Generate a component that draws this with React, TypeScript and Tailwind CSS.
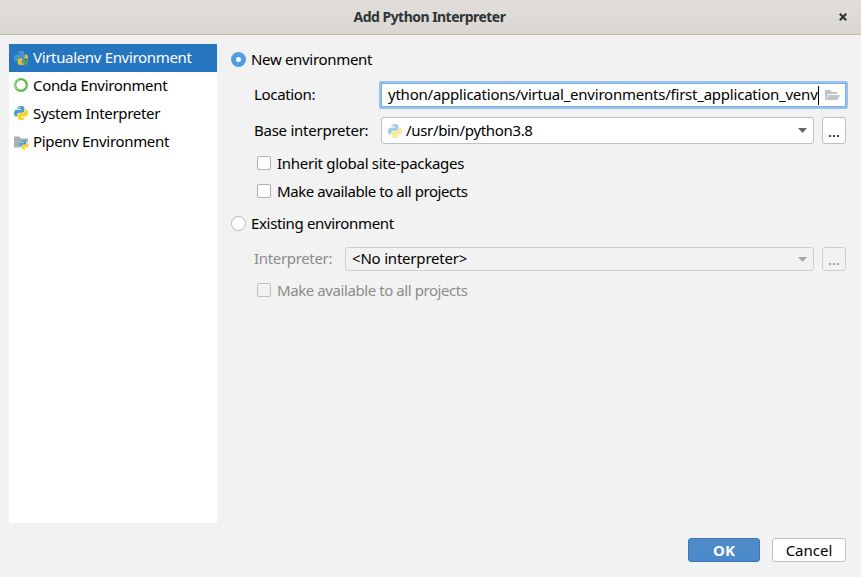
import type { ReactNode } from "react";

const SNAKE =
  "M4.6 4V2.6C4.6 1.5 6 1 8 1s3.3.6 3.3 1.7v3.1c0 1.2-.9 2-2 2H6.4c-1.300 0-2.200.9-2.200 2.100v1.500H3.100C1.700 11.400 1 10 1 8s.8-3.300 2.200-3.300h5V4zM6.200 2.100a.7.7 0 1 0 0 1.400.7.7 0 0 0 0-1.400z";

function Snakes({ transform }: { transform?: string }) {
  return (
    <g transform={transform}>
      <path d={SNAKE} fill="#4a9fd0" />
      <path d={SNAKE} fill="#ffd21f" transform="rotate(180 8 8)" />
    </g>
  );
}

function PythonIcon({ className = "" }: { className?: string }) {
  return (
    <svg viewBox="0 0 16 16" className={`size-4 shrink-0 ${className}`}>
      <Snakes />
    </svg>
  );
}

function VenvIcon() {
  return (
    <svg viewBox="0 0 16 16" className="-mt-px size-4 shrink-0">
      <g opacity=".85">
        <Snakes />
      </g>
      <path d="M9 8.5H16v7.5h-4z" fill="#2675bf" />
      <path d="M10.6 9.6l2.1 5.1 2.1-5.1" fill="none" stroke="#62b543" strokeWidth="1.2" />
    </svg>
  );
}

function CondaIcon() {
  return (
    <svg viewBox="0 0 16 16" className="-mt-[2px] size-4 shrink-0" fill="none">
      <circle cx="8" cy="8" r="5.8" stroke="#43b02a" strokeOpacity=".85" strokeWidth="2.3" />
      <path d="M3.8 12A5.8 5.8 0 0 1 5.7 2.7" stroke="#fff" strokeWidth="1" strokeDasharray="1 1.1" />
    </svg>
  );
}

function PipenvIcon() {
  return (
    <svg viewBox="0 0 16 16" className="size-4 shrink-0">
      <path d="M1 2.5h5.2L8 4.5h7V8H9L6 11v2.5H1z" fill="#a5b0b9" />
      <Snakes transform="translate(5.5 5.5) scale(.68)" />
    </svg>
  );
}

function Item({ icon, label, selected }: { icon: ReactNode; label: string; selected?: boolean }) {
  return (
    <div className={`flex h-7 items-center gap-1 pl-1 ${selected ? "bg-[#2675bf] text-white" : ""}`}>
      {icon}
      <span className="pb-[2px] tracking-[-0.33px]">{label}</span>
    </div>
  );
}

function Arrow({ color }: { color: string }) {
  return (
    <svg viewBox="0 0 9 5" className="ml-auto mr-[6px] h-[5px] w-[9px]">
      <path d="M0 0h9L4.5 5z" fill={color} />
    </svg>
  );
}

function Check({ label, disabled, track }: { label: string; disabled?: boolean; track: string }) {
  return (
    <label className={`flex h-7 items-center gap-[6px] pl-[26px] ${disabled ? "text-[#8c8c8c]" : ""}`}>
      <span
        className={`size-[14px] rounded-[2px] border ${disabled ? "border-[#bfbfbf]" : "border-[#b0b0b0] bg-white"}`}
      />
      <span className={track}>{label}</span>
    </label>
  );
}

export default function App() {
  return (
    <div className="flex h-[577px] w-[861px] flex-col overflow-hidden bg-[#f2f2f2] font-['Noto_Sans',sans-serif] text-[15px] leading-5 whitespace-nowrap text-black">
      <header className="flex h-[35px] shrink-0 items-center border-b border-[#c4b8ad] bg-linear-to-b from-[#e1dedb] to-[#dad6d2] text-[#2e3436]">
        <div className="w-9" />
        <h1 className="flex-1 pr-[2px] text-center text-[14px] font-bold tracking-[-0.53px]">Add Python Interpreter</h1>
        <svg viewBox="0 0 8 8" className="mr-[14px] ml-[14px] size-2">
          <path d="M.8.8l6.4 6.4M7.2.8L.8 7.2" stroke="#2e3436" strokeWidth="2.1" />
        </svg>
      </header>
      <div className="flex h-[488px] pt-[9px] pl-[9px]">
        <aside className="w-[208px] shrink-0 bg-white">
          <Item selected icon={<VenvIcon />} label="Virtualenv Environment" />
          <Item icon={<CondaIcon />} label="Conda Environment" />
          <Item icon={<PythonIcon className="-mt-[2px]" />} label="System Interpreter" />
          <Item icon={<PipenvIcon />} label="Pipenv Environment" />
        </aside>
        <main className="flex min-w-0 flex-1 flex-col pr-[14px] pl-[14px]">
          <label className="flex h-[30px] items-center gap-[5px]">
            <span className="flex size-[15px] items-center justify-center rounded-full bg-[#4f9ee3]">
              <span className="size-[5px] rounded-full bg-white" />
            </span>
            <span className="tracking-[-0.32px]">New environment</span>
          </label>
          <div className="-mr-px mt-[7px] flex h-[28px] items-center pl-[23px]">
            <span className="w-[125px] pb-[2px] tracking-[-0.33px]">Location:</span>
            <div className="flex h-7 min-w-0 flex-1 items-center rounded-[2px] border-2 border-[#97c3f3] bg-white">
              <div className="flex h-full flex-1 items-center border border-[#7eadde] pl-[6px]">
                <span className="pb-[2px] tracking-[-0.226px]">
                  ython/applications/virtual_environments/first_application_venv
                </span>
                <span className="h-[19px] w-px bg-black" />
                <svg viewBox="0 0 16 16" className="ml-auto mr-[5px] size-4">
                  <path d="M1 13V3h5l1.7 2H13v2H4L1.6 13z" fill="#bcc3c9" />
                  <path d="M4.5 8H16l-2.5 5H2z" fill="#bcc3c9" />
                </svg>
              </div>
            </div>
          </div>
          <div className="mt-2 flex h-[27px] items-center pl-[23px]">
            <span className="w-[127px] pb-px tracking-[-0.25px]">Base interpreter:</span>
            <div className="flex h-[27px] w-[433px] items-center rounded-[3px] border border-[#c0c0c0] bg-white pl-[5px]">
              <PythonIcon className="opacity-50" />
              <span className="ml-[3px] pb-px tracking-[-0.33px]">/usr/bin/python3.8</span>
              <Arrow color="#666666" />
            </div>
            <div className="ml-2 flex h-[27px] w-6 items-center justify-center rounded-[3px] border border-[#c0c0c0] bg-white">
              ...
            </div>
          </div>
          <div className="mt-[5px]">
            <Check label="Inherit global site-packages" track="tracking-[-0.28px]" />
            <Check label="Make available to all projects" track="tracking-[-0.42px]" />
          </div>
          <label className="mt-[2px] flex h-8 items-center gap-[5px]">
            <span className="size-[15px] rounded-full border border-[#b8b8b8] bg-white" />
            <span className="tracking-[-0.34px]">Existing environment</span>
          </label>
          <div className="mt-[8px] flex h-6 items-center pl-[23px]">
            <span className="w-[91px] pb-[2px] tracking-[-0.33px] text-[#8c8c8c]">Interpreter:</span>
            <div className="flex h-6 w-[469px] items-center rounded-[3px] border border-[#cfcfcf] pl-[6px]">
              <span className="pb-[2px] tracking-[-0.2px]">&lt;No interpreter&gt;</span>
              <Arrow color="#a8a8a8" />
            </div>
            <div className="ml-2 flex h-6 w-6 items-center justify-center rounded-[3px] border border-[#cfcfcf] text-[#8c8c8c]">
              ...
            </div>
          </div>
          <div className="mt-[5px]">
            <Check disabled label="Make available to all projects" track="tracking-[-0.42px]" />
          </div>
        </main>
      </div>
      <footer className="mt-[15px] flex h-6 justify-end gap-3 pr-[15px]">
        <button className="w-[72px] rounded-[3px] border border-[#3b77b8] bg-linear-to-b from-[#528cc7] to-[#4989cc] leading-[22px] font-bold text-white">
          OK
        </button>
        <button className="w-[74px] rounded-[3px] border border-[#c0c0c0] bg-white leading-[22px]">Cancel</button>
      </footer>
    </div>
  );
}
